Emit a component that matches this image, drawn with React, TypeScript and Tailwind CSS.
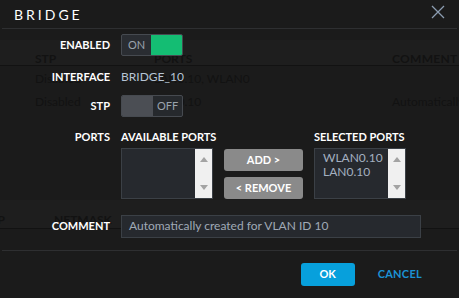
import React from "react";

const font = { fontFamily: "Lato, 'Open Sans', 'Liberation Sans', sans-serif" };

// faint table of the page behind the modal
const Backdrop = () => (
  <div className="pointer-events-none absolute inset-0 text-[12px] text-[#121212]">
    <div className="absolute left-0 right-0 top-[40px] h-[26px] border-b border-[#121212] bg-[#1e1e1e]" />
    <span className="absolute left-[35px] top-[50px] font-bold">STP</span>
    <span className="absolute left-[154px] top-[50px] font-bold">PORTS</span>
    <span className="absolute left-[392px] top-[50px] font-bold tracking-wide">COMMENT</span>
    <span className="absolute left-[35px] top-[70px]">Disabled</span>
    <span className="absolute left-[154px] top-[70px]">LAN0.10, WLAN0</span>
    <span className="absolute left-[35px] top-[93px]">Disabled</span>
    <span className="absolute left-[154px] top-[93px]">LAN0.10</span>
    <span className="absolute left-[392px] top-[93px]">Automatically</span>
    <div className="absolute left-0 right-0 top-[200px] h-[29px] border-b border-[#121212] bg-[#1e1e1e]" />
    <span className="absolute left-[-6px] top-[211px] font-bold">IP</span>
    <span className="absolute left-[54px] top-[211px] font-bold">NETMASK</span>
  </div>
);

const Label = ({ children }: { children: React.ReactNode }) => (
  <div className="w-[110px] shrink-0 text-right text-[11px] font-bold text-white">{children}</div>
);

const ScrollBar = () => (
  <div className="flex w-[17px] shrink-0 flex-col items-center justify-between bg-[#f0f0f0] py-[8px]">
    <svg width="8" height="5" viewBox="0 0 8 5"><path d="M0 5 L4 0 L8 5Z" fill="#a3a3a3" /></svg>
    <svg width="8" height="5" viewBox="0 0 8 5"><path d="M0 0 L4 5 L8 0Z" fill="#a3a3a3" /></svg>
  </div>
);

const ListBox = ({ items }: { items: string[] }) => (
  <div className="flex h-[51px] w-[92px] border border-[#3b4046] bg-[#26292e]">
    <div className="flex-1 pl-[8px] pt-[2px] text-[12px] leading-[14px] text-[#a4b0c0]">
      {items.map((i) => (
        <div key={i}>{i}</div>
      ))}
    </div>
    <ScrollBar />
  </div>
);

export default function App() {
  return (
    <div className="relative h-[298px] w-[459px] overflow-hidden bg-[#1b1b1b]" style={font}>
      <Backdrop />
      <div className="relative flex flex-col">
        {/* header */}
        <div className="mx-[2px] flex h-[29px] items-center justify-between border-b border-[#2e2f31] pl-[12px] pr-[12px]">
          <span className="text-[14px] tracking-[3px] text-white">BRIDGE</span>
          <svg width="14" height="14" viewBox="0 0 14 14" className="-mt-[5px]">
            <path d="M1 1 L13 13 M13 1 L1 13" stroke="#8c9db1" strokeWidth="1.3" />
          </svg>
        </div>

        {/* enabled */}
        <div className="mt-[5px] flex h-[22px] items-center gap-[11px]">
          <Label>ENABLED</Label>
          <div className="flex h-[22px] w-[62px] overflow-hidden rounded-[2px] border border-[#464a50] bg-[#2a2d32]">
            <div className="flex w-[29px] items-center justify-center text-[11px] text-[#9aa3ad]">ON</div>
            <div className="-my-px -mr-px flex-1 rounded-r-[2px] bg-[#14bd73]" />
          </div>
        </div>

        {/* interface */}
        <div className="mt-[10px] flex h-[22px] items-center gap-[11px]">
          <Label>INTERFACE</Label>
          <span className="text-[12px] text-[#b6c4d4]">BRIDGE_10</span>
        </div>

        {/* stp */}
        <div className="mt-[7px] flex h-[22px] items-center gap-[11px]">
          <Label>STP</Label>
          <div className="flex h-[22px] w-[62px] overflow-hidden rounded-[2px] border border-[#464a50] bg-[#26292d]">
            <div className="-my-px -ml-px w-[32px] rounded-l-[2px] bg-[#4b4e54]" />
            <div className="flex flex-1 items-center justify-center text-[11px] text-[#9aa3ad]">OFF</div>
          </div>
        </div>

        {/* ports */}
        <div className="mt-[14px] flex gap-[11px]">
          <div className="w-[110px] shrink-0 text-right text-[11px] font-bold leading-[12px] text-white">PORTS</div>
          <div className="flex flex-col">
            <div className="flex text-[11px] font-bold leading-[12px] text-white">
              <span className="w-[193px]">AVAILABLE PORTS</span>
              <span>SELECTED PORTS</span>
            </div>
            <div className="mt-[5px] flex items-start">
              <ListBox items={[]} />
              <div className="ml-[11px] mr-[11px] flex w-[79px] flex-col gap-[6px] pt-px">
                <button className="h-[22px] rounded-[3px] bg-[#8a8a8a] text-[11px] font-bold text-white">ADD &gt;</button>
                <button className="h-[22px] rounded-[3px] bg-[#8a8a8a] text-[11px] font-bold text-white">&lt; REMOVE</button>
              </div>
              <ListBox items={["WLAN0.10", "LAN0.10"]} />
            </div>
          </div>
        </div>

        {/* comment */}
        <div className="mt-[16px] flex h-[22px] items-center gap-[11px]">
          <Label>COMMENT</Label>
          <div className="flex h-[23px] w-[300px] items-center border border-[#3b4046] bg-[#26292e] px-[7px] text-[12px] text-[#a0a9b6]">
            Automatically created for VLAN ID 10
          </div>
        </div>

        {/* footer */}
        <div className="mx-[2px] mt-[13px] border-t border-[#2e2f31]" />
        <div className="mt-[12px] flex items-center justify-end pr-[37px]">
          <button className="h-[23px] w-[54px] rounded-[3px] bg-[#07a0dc] text-[11px] font-bold text-white">OK</button>
          <span className="ml-[23px] text-[11px] font-bold tracking-wide text-[#1b92d4]">CANCEL</span>
        </div>
      </div>
    </div>
  );
}
